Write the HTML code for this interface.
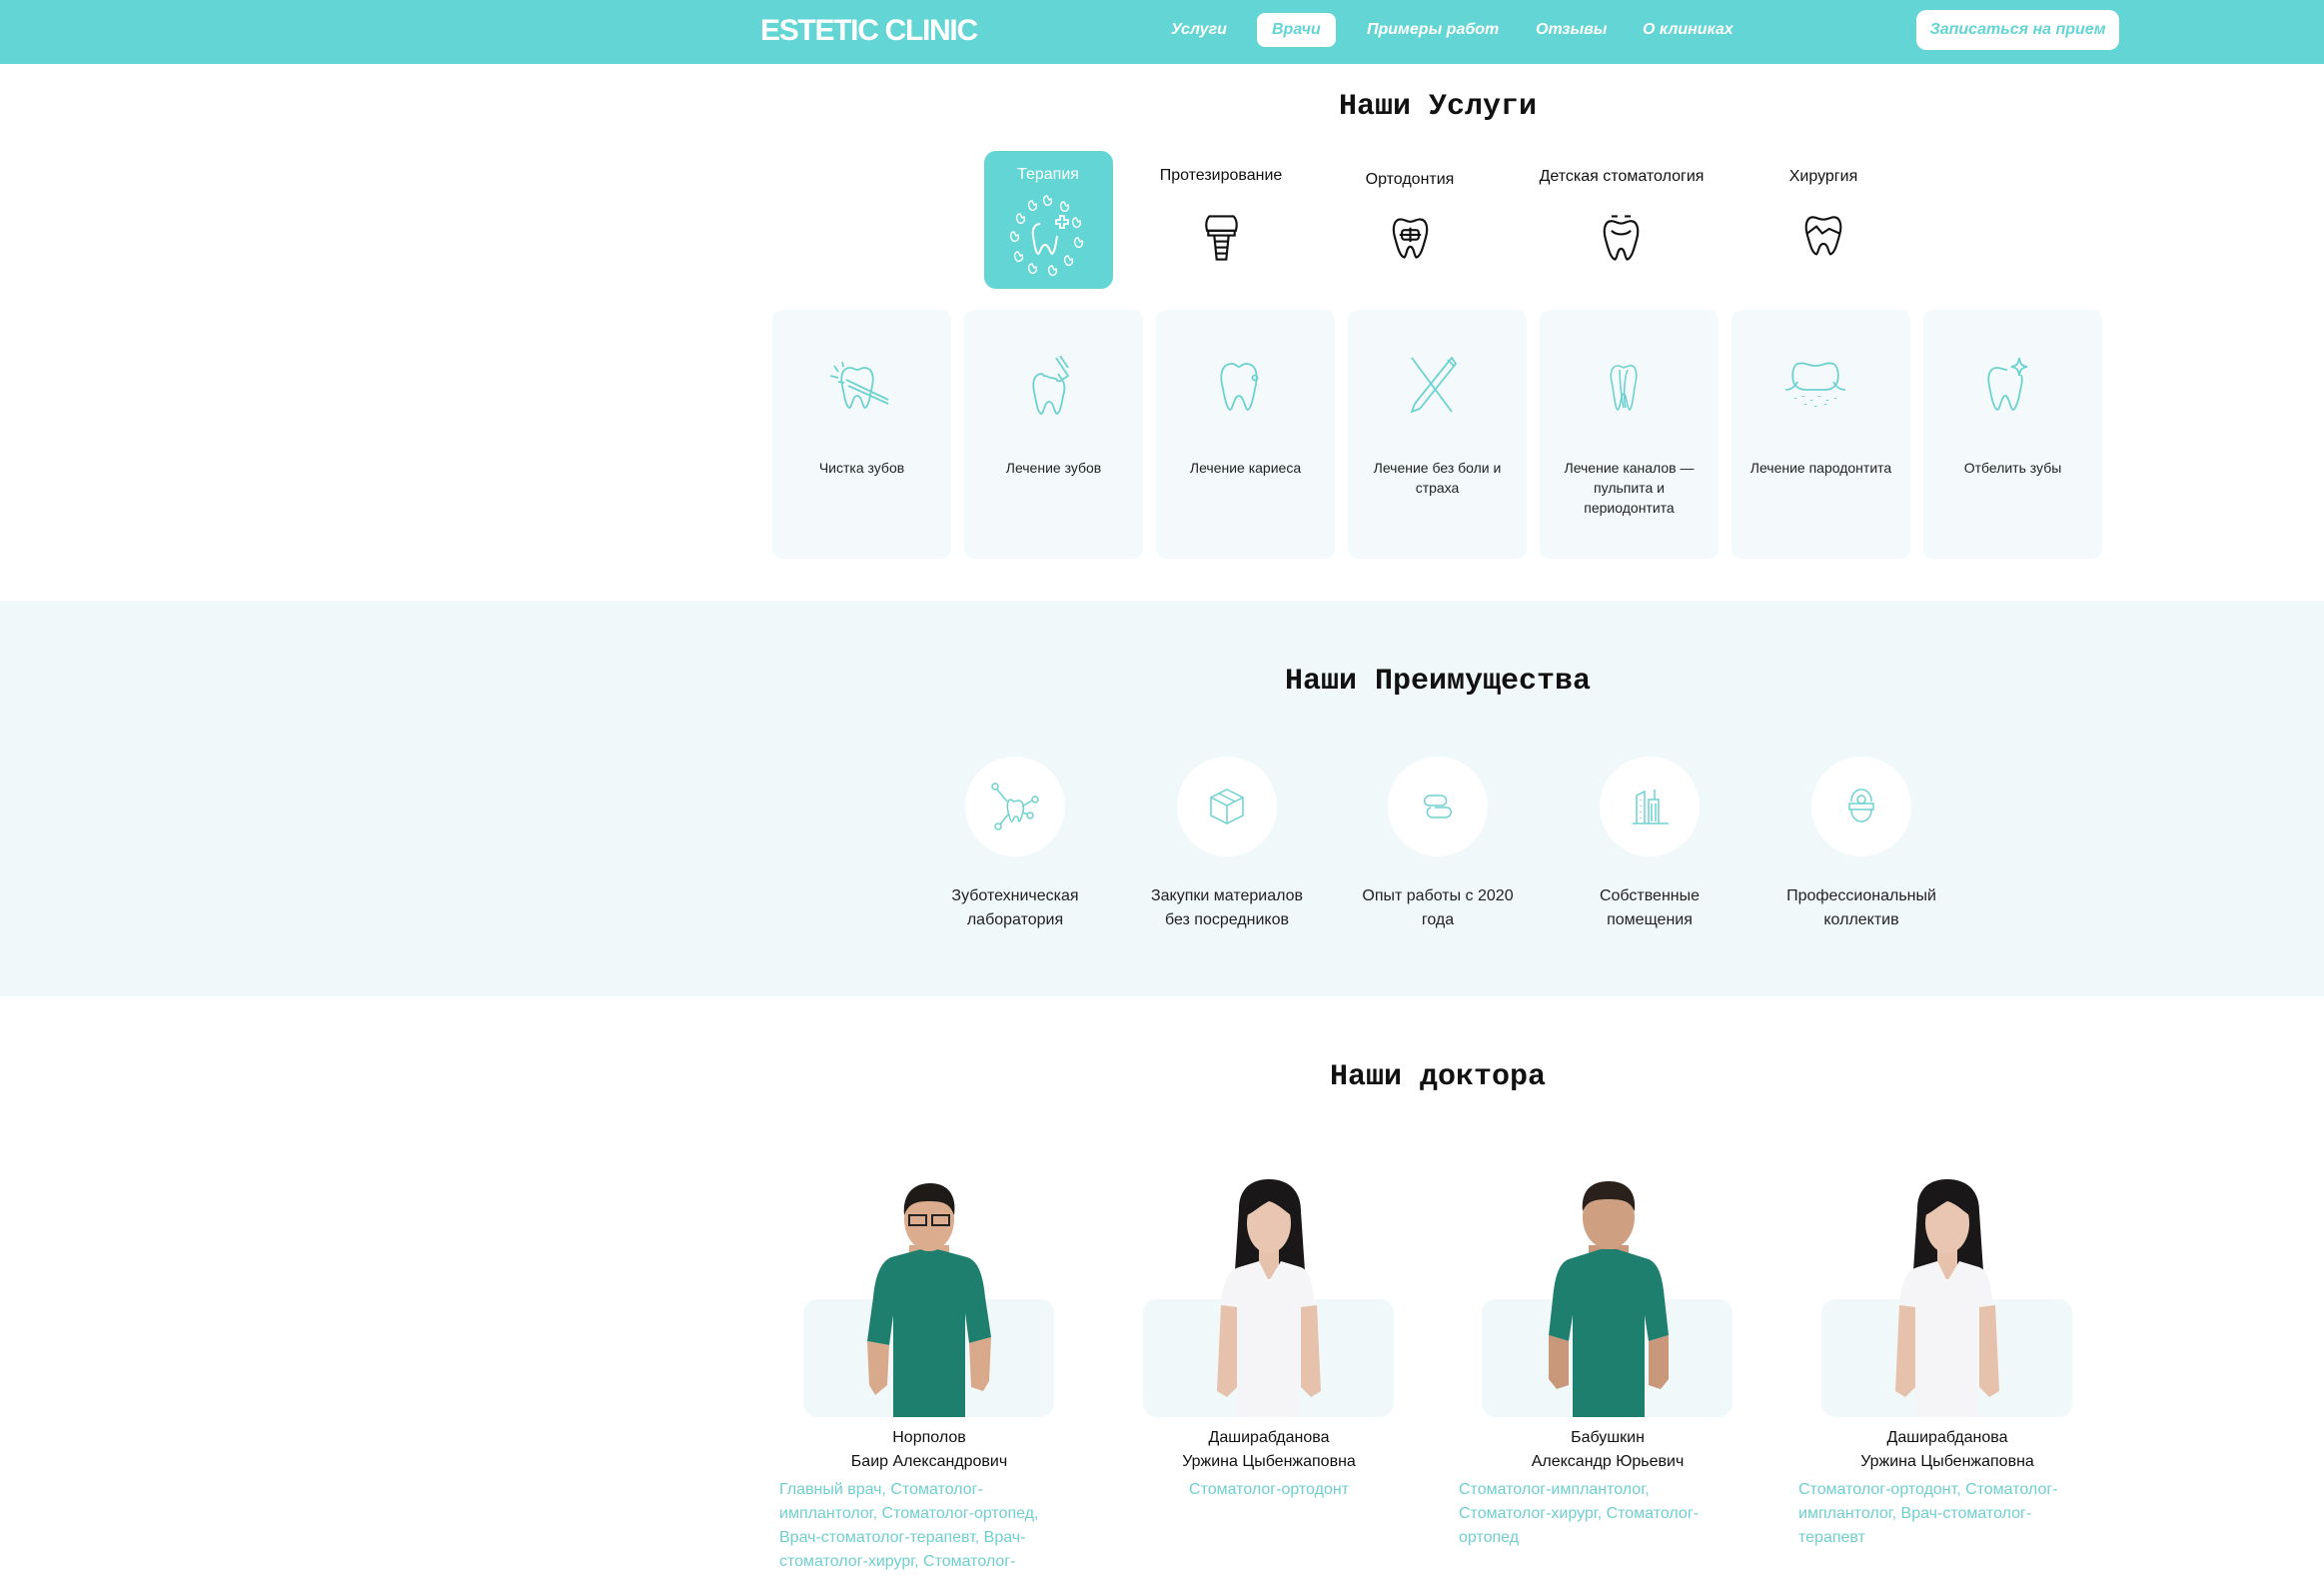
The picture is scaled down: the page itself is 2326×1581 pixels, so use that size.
<!DOCTYPE html>
<html><head><meta charset="utf-8">
<style>
*{margin:0;padding:0;box-sizing:border-box}
body{width:2326px;height:1581px;overflow:hidden;background:#fff;font-family:"Liberation Sans","DejaVu Sans",sans-serif;color:#111;position:relative}
.a{position:absolute}
.hdr{left:0;top:0;width:2326px;height:64px;background:#63d5d4}
.logo{left:761px;top:14px;font-size:30px;font-weight:bold;color:#fff;letter-spacing:-1.3px}
.nav{top:21px;font-size:16px;font-style:italic;font-weight:bold;color:#fff}
.pill{left:1258px;top:13px;width:79px;height:34px;background:#fff;border-radius:8px}
.btn{left:1918px;top:10px;width:203px;height:40px;background:#fff;border-radius:10px;color:#63d5d4;font-size:16px;font-style:italic;font-weight:bold;text-align:center;line-height:40px}
.ttl{font-family:"Liberation Mono",monospace;font-weight:bold;font-size:30px;width:1000px;left:939px;text-align:center}
.tab{font-size:16px;text-align:center;width:220px}
.card{top:310px;width:179px;height:249px;background:#f4fafb;border-radius:10px}
.card svg{position:absolute;left:44px;top:46px}
.card p{position:absolute;top:148px;left:8px;right:8px;text-align:center;font-size:14px;line-height:20px;color:#222}
.gray{left:0;top:601px;width:2326px;height:396px;background:#f1f8f9}
.circ{width:100px;height:100px;border-radius:50%;background:#fff;top:757px}
.circ svg{position:absolute;left:25px;top:25px}
.adv{top:885px;width:170px;text-align:center;font-size:16px;line-height:24px;color:#222}
.dbg{top:1300px;width:251px;height:118px;background:#f1f8f9;border-radius:14px}
.nm{top:1427px;width:300px;text-align:center;font-size:16px;line-height:24px;color:#111}
.sp{top:1479px;width:280px;font-size:16px;line-height:24px;color:#6fcfcf}
</style></head><body>
<div class="a hdr"></div>
<div class="a logo">ESTETIC CLINIC</div>
<div class="a pill"></div>
<div class="a nav" style="left:1172px">Услуги</div>
<div class="a nav" style="left:1273px;color:#63d5d4">Врачи</div>
<div class="a nav" style="left:1368px">Примеры работ</div>
<div class="a nav" style="left:1537px">Отзывы</div>
<div class="a nav" style="left:1644px">О клиниках</div>
<div class="a btn">Записаться на прием</div>

<div class="a ttl" style="top:90px">Наши Услуги</div>

<div class="a" style="left:985px;top:151px;width:129px;height:138px;background:#63d5d4;border-radius:12px"></div>
<div class="a tab" style="left:939px;top:166px;color:#fff">Терапия</div>
<svg class="a" style="left:1005px;top:192px" width="90" height="90" viewBox="0 0 90 90" fill="none" stroke="#fff" stroke-width="1.4">
<defs><path id="st" d="M-2 -4c-3 0-4 3-3 6s3 4 5 3 3-3 2-6l-2 1z"/></defs>
<use href="#st" x="45" y="8"/><use href="#st" x="62" y="14"/><use href="#st" x="74" y="30"/><use href="#st" x="76" y="50"/><use href="#st" x="66" y="68"/><use href="#st" x="50" y="78"/><use href="#st" x="30" y="76"/><use href="#st" x="16" y="64"/><use href="#st" x="12" y="44"/><use href="#st" x="18" y="26"/><use href="#st" x="30" y="13"/>
<path d="M36 32c-6 0-8 6-7 12 1 6 2 16 5 18 2 0 3-9 7-9s5 9 7 9c3-2 4-12 5-18" stroke-width="2"/>
<path d="M52 28h4v-4h4v4h4v4h-4v4h-4v-4h-4z" stroke-width="1.8"/></svg>

<div class="a tab" style="left:1112px;top:167px">Протезирование</div>
<div class="a tab" style="left:1301px;top:171px">Ортодонтия</div>
<div class="a tab" style="left:1513px;top:168px">Детская стоматология</div>
<div class="a tab" style="left:1715px;top:168px">Хирургия</div>

<svg class="a" style="left:1202px;top:214px" width="41" height="48" viewBox="0 0 34 40" fill="none" stroke="#111" stroke-width="1.8"><path d="M7 2h20c3 3 3 8 2 12H5C4 10 4 5 7 2z"/><path d="M6 14h22v4H6z"/><path d="M11 18l2 20h8l2-20M11 23h12M12 28h10M12 33h10"/></svg>
<svg class="a" style="left:1391px;top:217px" width="41" height="43" viewBox="0 0 34 36" fill="none" stroke="#111" stroke-width="1.8"><path d="M9 2C3 2 2 10 4 17c2 7 4 16 8 17 2-2 2-9 5-9s3 7 5 9c4-1 6-10 8-17 2-7 1-15-5-15-3 0-5 2-8 2S12 2 9 2z"/><rect x="10" y="11" width="14" height="8" rx="2"/><path d="M8 15h18M17 9v12"/></svg>
<svg class="a" style="left:1602px;top:214px" width="41" height="48" viewBox="0 0 34 40" fill="none" stroke="#111" stroke-width="1.8"><path d="M9 2h5M20 2h5"/><path d="M9 6C3 6 2 14 4 21c2 7 4 16 8 17 2-2 2-9 5-9s3 7 5 9c4-1 6-10 8-17 2-7 1-15-5-15-3 0-5 2-8 2S12 6 9 6z"/><path d="M9 14c4 4 12 4 16 0"/></svg>
<svg class="a" style="left:1804px;top:215px" width="42" height="44" viewBox="0 0 36 38" fill="none" stroke="#111" stroke-width="1.8"><path d="M9 2C3 2 2 10 4 17c2 7 4 16 8 17 2-2 2-9 6-9s4 7 6 9c4-1 6-10 8-17 2-7 1-15-5-15-3 0-5 2-9 2S12 2 9 2z"/><path d="M4 16l8-6 5 6 6-4 9 4"/></svg>

<div class="a card" style="left:773px"><svg width="90" height="70" viewBox="0 0 90 70" fill="none" stroke="#6dd1d0" stroke-width="1.8"><path d="M34 12c-8 0-10 8-8 18 2 8 3 20 7 22 3 0 3-12 8-12s5 12 8 12c4-2 5-14 7-22 2-10 0-18-8-18-3 0-5 2-7 2s-4-2-7-2z"/><path d="M30 24l42 20M32 30l40 18M14 20l8 2M18 10l4 6M26 6l1 5M22 26l6 1"/></svg><p>Чистка зубов</p></div>
<div class="a card" style="left:965px"><svg width="90" height="70" viewBox="0 0 90 70" fill="none" stroke="#6dd1d0" stroke-width="1.8"><path d="M34 18c-8 0-10 8-8 18 2 8 3 20 7 22 3 0 3-12 8-12s5 12 8 12c4-2 5-14 7-22 1-5 0-9-2-12-2 2-5 2-6-1-2 0-3-1-5-1-2 0-4-2-7-2z"/><path d="M48 2l8 12 4 6-6 4-4-6M52 0l8 12"/></svg><p>Лечение зубов</p></div>
<div class="a card" style="left:1157px"><svg width="90" height="70" viewBox="0 0 90 70" fill="none" stroke="#6dd1d0" stroke-width="1.8"><path d="M32 8c-10 0-12 10-10 20 2 10 4 24 8 26 3 0 4-14 9-14s6 14 9 14c4-2 6-16 8-26 2-10 0-20-10-20-4 0-5 3-7 3s-3-3-7-3z"/><circle cx="55" cy="22" r="2.5"/></svg><p>Лечение кариеса</p></div>
<div class="a card" style="left:1349px"><svg width="90" height="70" viewBox="0 0 90 70" fill="none" stroke="#6dd1d0" stroke-width="1.8"><path d="M20 2l40 54M60 2l-5 6-32 40-3 8 8-3 32-40 4-5zM56 4l6 6"/></svg><p>Лечение без боли и страха</p></div>
<div class="a card" style="left:1541px"><svg width="90" height="70" viewBox="0 0 90 70" fill="none" stroke="#6dd1d0" stroke-width="1.6"><path d="M34 10c-6 0-8 8-6 16 2 8 3 26 6 28 3-1 3-16 6-16s3 14 6 16c3-2 4-18 6-28 2-8 0-18-6-16-4 1-6 2-6 2s-3-2-6-2z"/><path d="M36 14c0 10 2 30 4 38M44 14c-4 10-4 30-2 38"/></svg><p>Лечение каналов — пульпита и периодонтита</p></div>
<div class="a card" style="left:1733px"><svg width="90" height="70" viewBox="0 0 90 70" fill="none" stroke="#6dd1d0" stroke-width="1.8"><path d="M22 8c-4 2-6 10-4 18 2 6 8 8 12 8h20c4 0 10-2 12-8 2-8 0-16-4-18-8-2-10 2-18 2S30 6 22 8z"/><path d="M10 34c6 0 10-4 12-8M70 34c-6 0-10-4-12-8"/><path d="M20 42v1M28 40v1M36 44v1M44 40v1M52 44v1M60 42v1M40 50v1M30 48v1M50 48v1" stroke-width="2.5"/></svg><p>Лечение пародонтита</p></div>
<div class="a card" style="left:1925px"><svg width="90" height="70" viewBox="0 0 90 70" fill="none" stroke="#6dd1d0" stroke-width="1.8"><path d="M30 12c-8 0-10 8-8 18 2 10 4 22 8 24 3 0 4-14 8-14s5 14 8 14c4-2 6-14 8-24 1-4 1-8 0-11"/><path d="M30 12c4 0 6 2 10 2"/><path d="M52 2c1 6 2 8 8 9-6 1-7 3-8 9-1-6-2-8-8-9 6-1 7-3 8-9z"/></svg><p>Отбелить зубы</p></div>

<div class="a gray"></div>
<div class="a ttl" style="top:665px">Наши Преимущества</div>

<div class="a circ" style="left:966px"><svg width="50" height="50" viewBox="0 0 50 50" fill="none" stroke="#6dd1d0" stroke-width="1.5"><circle cx="5" cy="5" r="3"/><circle cx="45" cy="18" r="3"/><circle cx="40" cy="34" r="3"/><circle cx="8" cy="45" r="3"/><path d="M7 8l10 12M42 19l-10 6M38 33l-6-2M10 43l8-10"/><path d="M20 18c-4 2-3 10-1 16 1 4 2 6 3 6s1-5 4-5 2 5 3 5 3-6 4-10c1-6 0-10-4-11-3 0-4 1-5 1s-2-2-4-2z"/></svg></div>
<div class="a circ" style="left:1178px"><svg width="50" height="50" viewBox="0 0 50 50" fill="none" stroke="#6dd1d0" stroke-width="1.5"><path d="M25 8l16 8v18l-16 8-16-8V16zM9 16l16 8 16-8M25 24v18M17 12l16 8"/></svg></div>
<div class="a circ" style="left:1389px"><svg width="50" height="50" viewBox="0 0 50 50" fill="none" stroke="#6dd1d0" stroke-width="1.5"><path d="M18 14h10c6 0 8 8 2 10H16c-6 0-6-10 2-10zM22 26h12c6 0 6 10-2 10H20c-6 0-8-8-2-10"/></svg></div>
<div class="a circ" style="left:1601px"><svg width="50" height="50" viewBox="0 0 50 50" fill="none" stroke="#6dd1d0" stroke-width="1.5"><path d="M8 42h36M12 42V14l8-4v32M24 42V18h10v24M30 18V8M27 22v18M31 22v18M16 18v1M16 24v1M16 30v1M16 36v1"/></svg></div>
<div class="a circ" style="left:1813px"><svg width="50" height="50" viewBox="0 0 50 50" fill="none" stroke="#6dd1d0" stroke-width="1.5"><path d="M15 20c0-8 5-12 10-12s10 4 10 12M13 22h24v6H13zM15 28c0 8 5 12 10 12s10-4 10-12"/><circle cx="25" cy="18" r="4"/></svg></div>

<div class="a adv" style="left:931px">Зуботехническая лаборатория</div>
<div class="a adv" style="left:1143px">Закупки материалов без посредников</div>
<div class="a adv" style="left:1354px">Опыт работы с 2020 года</div>
<div class="a adv" style="left:1566px">Собственные помещения</div>
<div class="a adv" style="left:1763px;width:200px">Профессиональный коллектив</div>

<div class="a ttl" style="top:1061px">Наши доктора</div>

<div class="a dbg" style="left:804px"></div>
<div class="a dbg" style="left:1144px"></div>
<div class="a dbg" style="left:1483px"></div>
<div class="a dbg" style="left:1823px"></div>

<svg class="a" style="left:850px;top:1176px" width="160" height="242" viewBox="0 0 160 242">
<path d="M60 70h40v30H60z" fill="#d9a98c"/>
<path d="M42 82l30-8h16l30 8c12 4 16 20 18 40l6 40-22 6-4-30v112H44V140l-4 30-22-4 6-44c2-22 8-36 18-40z" fill="#1f7f6f"/>
<path d="M18 166l22 4-2 40-12 10-6-10z M142 162l-22 6 2 44 12 4 6-10z" fill="#d9a98c"/>
<ellipse cx="80" cy="44" rx="25" ry="32" fill="#dcac8e"/>
<path d="M55 40c-2-22 10-32 26-32s27 10 24 32c-4-10-8-14-25-14-16 0-21 4-25 14z" fill="#1e1a18"/>
<path d="M60 40h17v10H60zM83 40h17v10H83z" fill="none" stroke="#222" stroke-width="2"/>
</svg>
<svg class="a" style="left:1190px;top:1180px" width="160" height="238" viewBox="0 0 160 238">
<path d="M50 30c0-22 14-30 30-30s32 8 32 32l4 60H46z" fill="#1a1718"/>
<path d="M70 70h20v30H70z" fill="#e6c2ad"/>
<path d="M50 88l20-6 10 20 12-20 20 6c10 4 12 20 14 40l-16 2v108H48V128l-16-2c2-22 6-34 18-38z" fill="#f5f4f6"/>
<path d="M32 126l16 2v80l-10 10-10-6zM128 126l-16 2v80l10 10 10-6z" fill="#e6c2ad"/>
<ellipse cx="80" cy="44" rx="22" ry="30" fill="#e8c6b1"/>
<path d="M58 36c0-18 10-26 24-26s22 10 20 26c-8-6-14-12-22-14-8 4-14 10-22 14z" fill="#1a1718"/>
</svg>
<svg class="a" style="left:1530px;top:1176px" width="160" height="242" viewBox="0 0 160 242">
<path d="M60 70h40v30H60z" fill="#c9977a"/>
<path d="M40 84l32-10h16l32 10c10 4 14 18 16 40l4 36-20 6-4-26v108H44V140l-4 26-20-6 4-36c2-22 6-36 16-40z" fill="#1f7f6f"/>
<path d="M20 160l20 6v44l-12 4-8-10zM140 160l-20 6v44l12 4 8-10z" fill="#c9977a"/>
<ellipse cx="80" cy="42" rx="26" ry="32" fill="#cf9f82"/>
<path d="M54 36c-2-22 10-30 26-30s28 8 26 30c-4-8-8-12-26-12s-22 4-26 12z" fill="#2b211c"/>
</svg>
<svg class="a" style="left:1869px;top:1180px" width="160" height="238" viewBox="0 0 160 238">
<path d="M50 30c0-22 14-30 30-30s32 8 32 32l4 60H46z" fill="#1a1718"/>
<path d="M70 70h20v30H70z" fill="#e6c2ad"/>
<path d="M50 88l20-6 10 20 12-20 20 6c10 4 12 20 14 40l-16 2v108H48V128l-16-2c2-22 6-34 18-38z" fill="#f5f4f6"/>
<path d="M32 126l16 2v80l-10 10-10-6zM128 126l-16 2v80l10 10 10-6z" fill="#e6c2ad"/>
<ellipse cx="80" cy="44" rx="22" ry="30" fill="#e8c6b1"/>
<path d="M58 36c0-18 10-26 24-26s22 10 20 26c-8-6-14-12-22-14-8 4-14 10-22 14z" fill="#1a1718"/>
</svg>

<div class="a nm" style="left:780px">Норполов<br>Баир Александрович</div>
<div class="a sp" style="left:780px">Главный врач, Стоматолог-имплантолог, Стоматолог-ортопед, Врач-стоматолог-терапевт, Врач-стоматолог-хирург, Стоматолог-</div>
<div class="a nm" style="left:1120px">Даширабданова<br>Уржина Цыбенжаповна</div>
<div class="a sp" style="left:1120px;width:300px;text-align:center">Стоматолог-ортодонт</div>
<div class="a nm" style="left:1459px">Бабушкин<br>Александр Юрьевич</div>
<div class="a sp" style="left:1460px">Стоматолог-имплантолог, Стоматолог-хирург, Стоматолог-ортопед</div>
<div class="a nm" style="left:1799px">Даширабданова<br>Уржина Цыбенжаповна</div>
<div class="a sp" style="left:1800px">Стоматолог-ортодонт, Стоматолог-имплантолог, Врач-стоматолог-терапевт</div>
</body></html>
